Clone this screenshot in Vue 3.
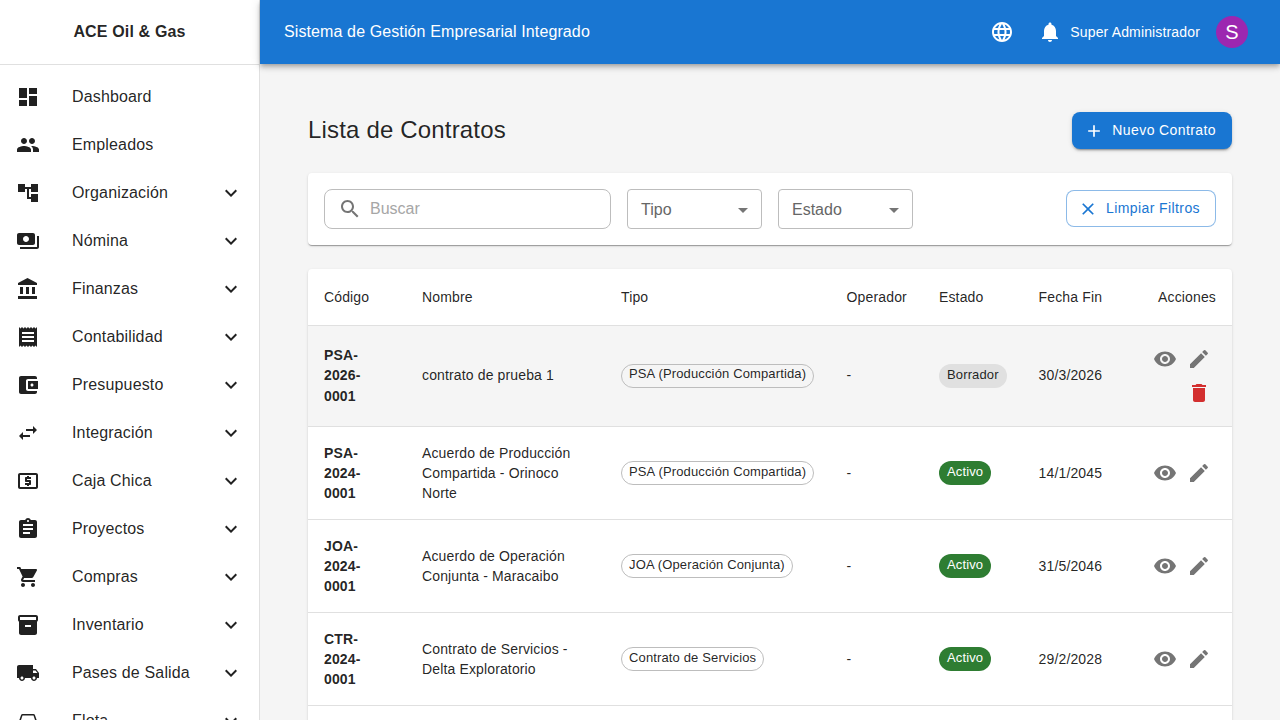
<script setup>
const icons = {
  dashboard: 'M3 13h8V3H3v10zm0 8h8v-6H3v6zm10 0h8V11h-8v10zm0-18v6h8V3h-8z',
  people: 'M16 11c1.66 0 2.99-1.34 2.99-3S17.66 5 16 5c-1.66 0-3 1.34-3 3s1.34 3 3 3zm-8 0c1.66 0 2.99-1.34 2.99-3S9.66 5 8 5C6.34 5 5 6.34 5 8s1.34 3 3 3zm0 2c-2.33 0-7 1.17-7 3.5V19h14v-2.5c0-2.33-4.67-3.5-7-3.5zm8 0c-.29 0-.62.02-.97.05 1.16.84 1.97 1.97 1.97 3.45V19h6v-2.5c0-2.33-4.67-3.5-7-3.5z',
  tree: 'M22 11V3h-7v3H9V3H2v8h7V8h2v10h4v3h7v-8h-7v3h-2V8h2v3z',
  payments: 'M19 14V6c0-1.1-.9-2-2-2H3c-1.1 0-2 .9-2 2v8c0 1.1.9 2 2 2h14c1.1 0 2-.9 2-2zm-9-1c-1.66 0-3-1.34-3-3s1.34-3 3-3 3 1.34 3 3-1.34 3-3 3zm13-6v11c0 1.1-.9 2-2 2H4v-2h17V7h2z',
  bank: 'M4 10v7h3v-7H4zm6 0v7h3v-7h-3zM2 22h19v-3H2v3zm14-12v7h3v-7h-3zm-4.5-9L2 6v2h19V6l-9.5-5z',
  receipt: 'M18 17H6v-2h12v2zm0-4H6v-2h12v2zm0-4H6V7h12v2zM3 22l1.5-1.5L6 22l1.5-1.5L9 22l1.5-1.5L12 22l1.5-1.5L15 22l1.5-1.5L18 22l1.5-1.5L21 22V2l-1.5 1.5L18 2l-1.5 1.5L15 2l-1.5 1.5L12 2l-1.5 1.5L9 2 7.5 3.5 6 2 4.5 3.5 3 2v20z',
  wallet: 'M21 18v1c0 1.1-.9 2-2 2H5c-1.11 0-2-.9-2-2V5c0-1.1.89-2 2-2h14c1.1 0 2 .9 2 2v1h-9c-1.11 0-2 .9-2 2v8c0 1.1.89 2 2 2h9zm-9-2h10V8H12v8zm4-2.5c-.83 0-1.5-.67-1.5-1.5s.67-1.5 1.5-1.5 1.5.67 1.5 1.5-.67 1.5-1.5 1.5z',
  swap: 'M6.99 11 3 15l3.99 4v-3H14v-2H6.99v-3zM21 9l-3.99-4v3H10v2h7.01v3L21 9z',
  atm: 'M11 17h2v-1h1c.55 0 1-.45 1-1v-3c0-.55-.45-1-1-1h-3v-1h4V8h-2V7h-2v1h-1c-.55 0-1 .45-1 1v3c0 .55.45 1 1 1h3v1H9v2h2v1zm9-13H4c-1.11 0-1.99.89-1.99 2L2 18c0 1.11.89 2 2 2h16c1.11 0 2-.89 2-2V6c0-1.11-.89-2-2-2zm0 14H4V6h16v12z',
  assignment: 'M19 3h-4.18C14.4 1.84 13.3 1 12 1c-1.3 0-2.4.84-2.82 2H5c-1.1 0-2 .9-2 2v14c0 1.1.9 2 2 2h14c1.1 0 2-.9 2-2V5c0-1.1-.9-2-2-2zm-7 0c.55 0 1 .45 1 1s-.45 1-1 1-1-.45-1-1 .45-1 1-1zm2 14H7v-2h7v2zm3-4H7v-2h10v2zm0-4H7V7h10v2z',
  cart: 'M7 18c-1.1 0-1.99.9-1.99 2S5.9 22 7 22s2-.9 2-2-.9-2-2-2zM1 2v2h2l3.6 7.59-1.35 2.45c-.16.28-.25.61-.25.96 0 1.1.9 2 2 2h12v-2H7.42c-.14 0-.25-.11-.25-.25l.03-.12.9-1.63h7.45c.75 0 1.41-.41 1.75-1.03l3.58-6.49c.08-.14.12-.31.12-.48 0-.55-.45-1-1-1H5.21l-.94-2H1zm16 16c-1.1 0-1.99.9-1.99 2s.89 2 1.99 2 2-.9 2-2-.9-2-2-2z',
  inventory: 'M20 2H4c-1 0-2 .9-2 2v3.01c0 .72.43 1.34 1 1.69V20c0 1.1 1.1 2 2 2h14c.9 0 2-.9 2-2V8.7c.57-.35 1-.97 1-1.69V4c0-1.1-1-2-2-2zm-5 12H9v-2h6v2zm5-7H4V4l16-.02V7z',
  truck: 'M20 8h-3V4H3c-1.1 0-2 .9-2 2v11h2c0 1.66 1.34 3 3 3s3-1.34 3-3h6c0 1.66 1.34 3 3 3s3-1.34 3-3h2v-5l-3-4zM6 18.5c-.83 0-1.5-.67-1.5-1.5s.67-1.5 1.5-1.5 1.5.67 1.5 1.5-.67 1.5-1.5 1.5zm13.5-9 1.96 2.5H17V9.5h2.5zm-1.5 9c-.83 0-1.5-.67-1.5-1.5s.67-1.5 1.5-1.5 1.5.67 1.5 1.5-.67 1.5-1.5 1.5z',
  car: 'M18.92 6.01C18.72 5.42 18.16 5 17.5 5h-11c-.66 0-1.21.42-1.42 1.01L3 12v8c0 .55.45 1 1 1h1c.55 0 1-.45 1-1v-1h12v1c0 .55.45 1 1 1h1c.55 0 1-.45 1-1v-8l-2.08-5.99zM6.5 16c-.83 0-1.5-.67-1.5-1.5S5.67 13 6.5 13s1.5.67 1.5 1.5S7.33 16 6.5 16zm11 0c-.83 0-1.5-.67-1.5-1.5s.67-1.5 1.5-1.5 1.5.67 1.5 1.5-.67 1.5-1.5 1.5zM5 11l1.5-4.5h11L19 11H5z',
  expand: 'M16.59 8.59 12 13.17 7.41 8.59 6 10l6 6 6-6z',
  globe: 'M11.99 2C6.47 2 2 6.48 2 12s4.47 10 9.99 10C17.52 22 22 17.52 22 12S17.52 2 11.99 2zm6.93 6h-2.95c-.32-1.25-.78-2.45-1.38-3.56 1.84.63 3.37 1.91 4.33 3.56zM12 4.04c.83 1.2 1.48 2.53 1.91 3.96h-3.82c.43-1.43 1.08-2.76 1.91-3.96zM4.26 14C4.1 13.36 4 12.69 4 12s.1-1.36.26-2h3.38c-.08.66-.14 1.32-.14 2 0 .68.06 1.34.14 2H4.26zm.82 2h2.95c.32 1.25.78 2.45 1.38 3.56-1.84-.63-3.37-1.9-4.33-3.56zm2.95-8H5.08c.96-1.66 2.49-2.93 4.33-3.56C8.81 5.55 8.35 6.75 8.03 8zM12 19.96c-.83-1.2-1.48-2.53-1.91-3.96h3.82c-.43 1.43-1.08 2.76-1.91 3.96zM14.34 14H9.66c-.09-.66-.16-1.32-.16-2 0-.68.07-1.35.16-2h4.68c.09.65.16 1.32.16 2 0 .68-.07 1.34-.16 2zm.25 5.56c.6-1.11 1.06-2.31 1.38-3.56h2.95c-.96 1.65-2.49 2.93-4.33 3.56zM16.36 14c.08-.66.14-1.32.14-2 0-.68-.06-1.34-.14-2h3.38c.16.64.26 1.31.26 2s-.1 1.36-.26 2h-3.38z',
  bell: 'M12 22c1.1 0 2-.9 2-2h-4c0 1.1.89 2 2 2zm6-6v-5c0-3.07-1.64-5.64-4.5-6.32V4c0-.83-.67-1.5-1.5-1.5s-1.5.67-1.5 1.5v.68C7.63 5.36 6 7.92 6 11v5l-2 2v1h16v-1l-2-2z',
  add: 'M19 13h-6v6h-2v-6H5v-2h6V5h2v6h6v2z',
  close: 'M19 6.41 17.59 5 12 10.59 6.41 5 5 6.41 10.59 12 5 17.59 6.41 19 12 13.41 17.59 19 19 17.59 13.41 12z',
  search: 'M15.5 14h-.79l-.28-.27C15.41 12.59 16 11.11 16 9.5 16 5.91 13.09 3 9.5 3S3 5.91 3 9.5 5.91 16 9.5 16c1.61 0 3.09-.59 4.23-1.57l.27.28v.79l5 4.99L20.49 19l-4.99-5zm-6 0C7.01 14 5 11.99 5 9.5S7.01 5 9.5 5 14 7.01 14 9.5 11.99 14 9.5 14z',
  eye: 'M12 4.5C7 4.5 2.73 7.61 1 12c1.73 4.39 6 7.5 11 7.5s9.27-3.11 11-7.5c-1.73-4.39-6-7.5-11-7.5zM12 17c-2.76 0-5-2.24-5-5s2.24-5 5-5 5 2.24 5 5-2.24 5-5 5zm0-8c-1.66 0-3 1.34-3 3s1.34 3 3 3 3-1.34 3-3-1.34-3-3-3z',
  edit: 'M3 17.25V21h3.75L17.81 9.94l-3.75-3.75L3 17.25zM20.71 7.04c.39-.39.39-1.02 0-1.41l-2.34-2.34a.9959.9959 0 0 0-1.41 0l-1.83 1.83 3.75 3.75 1.83-1.83z',
  trash: 'M6 19c0 1.1.9 2 2 2h8c1.1 0 2-.9 2-2V7H6v12zM19 4h-3.5l-1-1h-5l-1 1H5v2h14V4z',
  arrow: 'M7 10l5 5 5-5z'
}

const menu = [
  { label: 'Dashboard', icon: 'dashboard' },
  { label: 'Empleados', icon: 'people' },
  { label: 'Organización', icon: 'tree', sub: true },
  { label: 'Nómina', icon: 'payments', sub: true },
  { label: 'Finanzas', icon: 'bank', sub: true },
  { label: 'Contabilidad', icon: 'receipt', sub: true },
  { label: 'Presupuesto', icon: 'wallet', sub: true },
  { label: 'Integración', icon: 'swap', sub: true },
  { label: 'Caja Chica', icon: 'atm', sub: true },
  { label: 'Proyectos', icon: 'assignment', sub: true },
  { label: 'Compras', icon: 'cart', sub: true },
  { label: 'Inventario', icon: 'inventory', sub: true },
  { label: 'Pases de Salida', icon: 'truck', sub: true },
  { label: 'Flota', icon: 'car', sub: true }
]

const contratos = [
  { codigo: 'PSA-2026-0001', nombre: 'contrato de prueba 1', tipo: 'PSA (Producción Compartida)', estado: 'Borrador', fin: '30/3/2026', borrador: true },
  { codigo: 'PSA-2024-0001', nombre: 'Acuerdo de Producción Compartida - Orinoco Norte', tipo: 'PSA (Producción Compartida)', estado: 'Activo', fin: '14/1/2045' },
  { codigo: 'JOA-2024-0001', nombre: 'Acuerdo de Operación Conjunta - Maracaibo', tipo: 'JOA (Operación Conjunta)', estado: 'Activo', fin: '31/5/2046' },
  { codigo: 'CTR-2024-0001', nombre: 'Contrato de Servicios - Delta Exploratorio', tipo: 'Contrato de Servicios', estado: 'Activo', fin: '29/2/2028' }
]
</script>

<template>
  <div class="layout">
    <aside class="sidebar">
      <div class="brand">ACE Oil &amp; Gas</div>
      <nav class="menu">
        <div v-for="item in menu" :key="item.label" class="menu-item">
          <svg class="menu-icon" viewBox="0 0 24 24"><path :d="icons[item.icon]" /></svg>
          <span class="menu-label">{{ item.label }}</span>
          <svg v-if="item.sub" class="menu-icon" viewBox="0 0 24 24"><path :d="icons.expand" /></svg>
        </div>
      </nav>
    </aside>

    <div class="main">
      <header class="topbar">
        <div class="topbar-title">Sistema de Gestión Empresarial Integrado</div>
        <svg class="top-icon" viewBox="0 0 24 24"><path :d="icons.globe" /></svg>
        <svg class="top-icon bell" viewBox="0 0 24 24"><path :d="icons.bell" /></svg>
        <span class="user">Super Administrador</span>
        <div class="avatar">S</div>
      </header>

      <main class="content">
        <div class="page-head">
          <h1>Lista de Contratos</h1>
          <button class="btn-new">
            <svg viewBox="0 0 24 24"><path :d="icons.add" /></svg>
            <span>Nuevo Contrato</span>
          </button>
        </div>

        <section class="filters">
          <div class="search">
            <svg viewBox="0 0 24 24"><path :d="icons.search" /></svg>
            <span>Buscar</span>
          </div>
          <div class="select">
            <span>Tipo</span>
            <svg viewBox="0 0 24 24"><path :d="icons.arrow" /></svg>
          </div>
          <div class="select">
            <span>Estado</span>
            <svg viewBox="0 0 24 24"><path :d="icons.arrow" /></svg>
          </div>
          <button class="btn-clear">
            <svg viewBox="0 0 24 24"><path :d="icons.close" /></svg>
            <span>Limpiar Filtros</span>
          </button>
        </section>

        <section class="table-card">
          <table>
            <colgroup>
              <col class="col-code" />
              <col class="col-name" />
              <col class="col-type" />
              <col class="col-op" />
              <col class="col-state" />
              <col class="col-date" />
              <col class="col-actions" />
            </colgroup>
            <thead>
              <tr>
                <th>Código</th>
                <th>Nombre</th>
                <th>Tipo</th>
                <th>Operador</th>
                <th>Estado</th>
                <th>Fecha Fin</th>
                <th class="right">Acciones</th>
              </tr>
            </thead>
            <tbody>
              <tr v-for="c in contratos" :key="c.codigo" :class="{ hovered: c.borrador }">
                <td class="code">{{ c.codigo }}</td>
                <td>{{ c.nombre }}</td>
                <td><span class="chip outlined">{{ c.tipo }}</span></td>
                <td>-</td>
                <td><span class="chip" :class="c.borrador ? 'draft' : 'active'">{{ c.estado }}</span></td>
                <td>{{ c.fin }}</td>
                <td class="right">
                  <div class="actions">
                    <button class="icon-btn"><svg viewBox="0 0 24 24"><path :d="icons.eye" /></svg></button>
                    <button class="icon-btn"><svg viewBox="0 0 24 24"><path :d="icons.edit" /></svg></button>
                    <button v-if="c.borrador" class="icon-btn danger"><svg viewBox="0 0 24 24"><path :d="icons.trash" /></svg></button>
                  </div>
                </td>
              </tr>
              <tr class="more"><td colspan="7"></td></tr>
            </tbody>
          </table>
        </section>
      </main>
    </div>
  </div>
</template>

<style>
html, body {
  margin: 0;
  height: 100%;
  overflow: hidden;
}
</style>

<style scoped>
.layout {
  display: flex;
  height: 100vh;
  overflow: hidden;
  background: #f5f5f5;
  color: rgba(0, 0, 0, 0.87);
  font-family: "Liberation Sans", Arial, sans-serif;
}

.sidebar {
  width: 259px;
  flex: none;
  background: #fff;
  border-right: 1px solid #e0e0e0;
  overflow: hidden;
}

.brand {
  height: 64px;
  border-bottom: 1px solid #e0e0e0;
  display: flex;
  align-items: center;
  justify-content: center;
  font-size: 16px;
  font-weight: 700;
  letter-spacing: 0.15px;
}

.menu {
  padding: 8px 0;
}

.menu-item {
  display: flex;
  align-items: center;
  height: 48px;
  padding: 0 16px;
  font-size: 16px;
  letter-spacing: 0.15px;
}

.menu-icon {
  width: 24px;
  height: 24px;
  flex: none;
  fill: rgba(0, 0, 0, 0.87);
}

.menu-label {
  margin-left: 32px;
  flex: 1;
}

.main {
  flex: 1;
  min-width: 0;
  display: flex;
  flex-direction: column;
}

.topbar {
  height: 64px;
  flex: none;
  display: flex;
  align-items: center;
  padding: 0 32px 0 24px;
  background: #1976d2;
  color: #fff;
  box-shadow: 0 2px 4px -1px rgba(0, 0, 0, 0.2), 0 4px 5px 0 rgba(0, 0, 0, 0.14), 0 1px 10px 0 rgba(0, 0, 0, 0.12);
  position: relative;
}

.topbar-title {
  flex: 1;
  font-size: 16px;
  letter-spacing: 0.11px;
}

.top-icon {
  width: 24px;
  height: 24px;
  fill: #fff;
}

.bell {
  margin-left: 24px;
}

.user {
  margin: 0 16px 0 8px;
  font-size: 14px;
  letter-spacing: 0.15px;
}

.avatar {
  width: 32px;
  height: 32px;
  border-radius: 50%;
  background: #9c27b0;
  display: flex;
  align-items: center;
  justify-content: center;
  font-size: 20px;
}

.content {
  flex: 1;
  min-height: 0;
  overflow: hidden;
  padding: 48px;
}

.page-head {
  display: flex;
  align-items: center;
  justify-content: space-between;
  margin-bottom: 24px;
}

h1 {
  margin: 0;
  font-size: 24px;
  font-weight: 400;
  line-height: 1.334;
  letter-spacing: 0.17px;
}

.btn-new {
  display: flex;
  align-items: center;
  gap: 8px;
  height: 37px;
  padding: 0 16px 0 12px;
  border: 0;
  border-radius: 8px;
  background: #1976d2;
  color: #fff;
  font: 400 14px "Liberation Sans", Arial, sans-serif;
  letter-spacing: 0.4px;
  white-space: nowrap;
  box-shadow: 0 3px 1px -2px rgba(0, 0, 0, 0.2), 0 2px 2px 0 rgba(0, 0, 0, 0.14), 0 1px 5px 0 rgba(0, 0, 0, 0.12);
}

.btn-new span,
.btn-clear span {
  margin-bottom: 2px;
}

.btn-new svg,
.btn-clear svg {
  width: 20px;
  height: 20px;
  fill: currentColor;
}

.filters {
  display: flex;
  align-items: center;
  gap: 16px;
  height: 72px;
  box-sizing: border-box;
  padding: 0 16px;
  margin-bottom: 24px;
  background: #fff;
  border-radius: 4px;
  box-shadow: 0 2px 1px -1px rgba(0, 0, 0, 0.2), 0 1px 1px 0 rgba(0, 0, 0, 0.14), 0 1px 3px 0 rgba(0, 0, 0, 0.12);
}

.search {
  display: flex;
  align-items: center;
  gap: 8px;
  width: 287px;
  height: 40px;
  box-sizing: border-box;
  padding: 0 13px;
  border: 1px solid #bdbdbd;
  border-radius: 8px;
  color: #a6a6a6;
  font-size: 16px;
}

.search svg {
  width: 24px;
  height: 24px;
  fill: #757575;
}

.select {
  display: flex;
  align-items: center;
  justify-content: space-between;
  width: 135px;
  height: 40px;
  box-sizing: border-box;
  padding: 1px 6px 0 13px;
  border: 1px solid #bdbdbd;
  border-radius: 4px;
  color: #666;
  font-size: 16px;
}

.select svg {
  width: 24px;
  height: 24px;
  fill: #757575;
}

.btn-clear {
  display: flex;
  align-items: center;
  gap: 8px;
  height: 37px;
  margin-left: auto;
  margin-bottom: 1px;
  padding: 0 15px 0 11px;
  background: #fff;
  border: 1px solid rgba(25, 118, 210, 0.5);
  border-radius: 8px;
  color: #1976d2;
  font: 400 14px "Liberation Sans", Arial, sans-serif;
  letter-spacing: 0.4px;
  white-space: nowrap;
}

.table-card {
  background: #fff;
  border-radius: 4px;
  overflow: hidden;
  box-shadow: 0 2px 1px -1px rgba(0, 0, 0, 0.2), 0 1px 1px 0 rgba(0, 0, 0, 0.14), 0 1px 3px 0 rgba(0, 0, 0, 0.12);
}

table {
  width: 100%;
  table-layout: fixed;
  border-collapse: collapse;
  font-size: 14px;
  line-height: 1.43;
  letter-spacing: 0.14px;
}

.col-code { width: 98px; }
.col-name { width: 199px; }
.col-type { width: 225.6px; }
.col-op { width: 92.4px; }
.col-state { width: 99.6px; }
.col-date { width: 109.4px; }
.col-actions { width: 100px; }

th,
td {
  padding: 16px;
  text-align: left;
  border-bottom: 1px solid #e0e0e0;
}

th {
  font-weight: 400;
  height: 24px;
}

.right {
  text-align: right;
}

.hovered {
  background: #f5f5f5;
}

.hovered td:not(.right) {
  padding-bottom: 17px;
}

.code {
  font-weight: 700;
}

.chip {
  display: inline-flex;
  align-items: center;
  height: 24px;
  box-sizing: border-box;
  padding: 0 8px 2px;
  border-radius: 12px;
  font-size: 13px;
  vertical-align: middle;
}

.outlined {
  border: 1px solid #bdbdbd;
  padding: 0 7px 2px;
}

.draft {
  background: #e0e0e0;
  padding-bottom: 0;
}

.active {
  background: #2e7d32;
  color: #fff;
}

.actions {
  display: flex;
  flex-wrap: wrap;
  justify-content: flex-end;
}

.icon-btn {
  width: 34px;
  height: 34px;
  padding: 5px;
  border: 0;
  background: none;
}

.icon-btn svg {
  display: block;
  width: 24px;
  height: 24px;
  fill: #757575;
}

.icon-btn.danger svg {
  fill: #d32f2f;
}

.more td {
  height: 60px;
}
</style>
